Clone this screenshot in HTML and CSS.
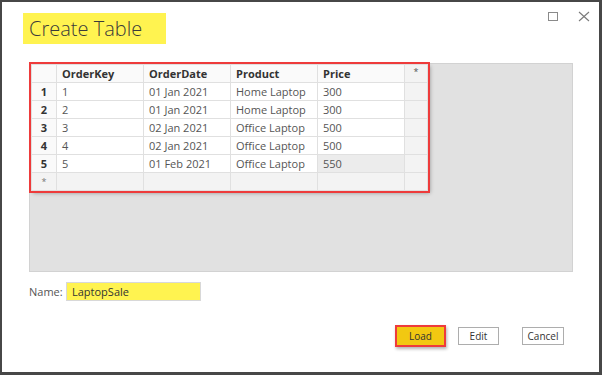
FILE: index.html
```html
<!DOCTYPE html>
<html lang="en">
<head>
    <meta charset="UTF-8">
    <title>Create Table</title>
    <link rel="stylesheet" href="styles.css">
</head>
<body>
    <div class="dialog">
        <div class="titlebar">
            <h1 class="title">Create Table</h1>
            <div class="controls">
                <svg class="ctl" width="12" height="11" viewBox="0 0 12 11"><rect x="1.5" y="1.5" width="9" height="8" fill="none" stroke="#8a8a8a" stroke-width="1"/></svg>
                <svg class="ctl" width="12" height="11" viewBox="0 0 12 11"><path d="M1 1 L11 10 M11 1 L1 10" stroke="#7a7a7a" stroke-width="1.1" fill="none"/></svg>
            </div>
        </div>

        <div class="grid-area">
            <table class="data">
                <thead>
                    <tr>
                        <th class="rn"></th>
                        <th>OrderKey</th>
                        <th>OrderDate</th>
                        <th>Product</th>
                        <th>Price</th>
                        <th class="star">*</th>
                    </tr>
                </thead>
                <tbody>
                    <tr><td class="rn">1</td><td>1</td><td>01 Jan 2021</td><td>Home Laptop</td><td>300</td><td class="star"></td></tr>
                    <tr><td class="rn">2</td><td>2</td><td>01 Jan 2021</td><td>Home Laptop</td><td>300</td><td class="star"></td></tr>
                    <tr><td class="rn">3</td><td>3</td><td>02 Jan 2021</td><td>Office Laptop</td><td>500</td><td class="star"></td></tr>
                    <tr><td class="rn">4</td><td>4</td><td>02 Jan 2021</td><td>Office Laptop</td><td>500</td><td class="star"></td></tr>
                    <tr><td class="rn">5</td><td>5</td><td>01 Feb 2021</td><td>Office Laptop</td><td class="sel">550</td><td class="star"></td></tr>
                    <tr class="new"><td class="rn">*</td><td></td><td></td><td></td><td></td><td class="star"></td></tr>
                </tbody>
            </table>
        </div>

        <div class="name-row">
            <label for="table-name">Name:</label>
            <input type="text" id="table-name" value="LaptopSale">
        </div>

        <div class="buttons">
            <button class="btn load">Load</button>
            <button class="btn edit">Edit</button>
            <button class="btn cancel">Cancel</button>
        </div>
    </div>
</body>
</html>
```

FILE: styles.css
```css
body { margin: 0; font-family: "Open Sans", "Noto Sans", sans-serif; background: #fff; }
.dialog { width: 602px; height: 375px; box-sizing: border-box; border: 2px solid #474747; border-right-width: 3px; border-bottom-width: 3px; background: #fff; }

.titlebar { display: flex; justify-content: space-between; align-items: flex-start; height: 61px; }
.title { margin: 11px 0 0 21px; padding: 0 0 0 6px; width: 143px; box-sizing: border-box; height: 31px; line-height: 32px; background: #fff350; font-size: 20px; font-weight: 300; color: #3a3a3a; }
.controls { display: flex; gap: 19px; margin: 9px 9px 0 0; }

.grid-area { margin: 0 26px 0 27px; height: 207px; background: #e1e1e1; border: 1px solid #d2d2d2; }

.data { border-collapse: collapse; table-layout: fixed; width: 395px; margin: 0 0 0 1px; outline: 2px solid #ee3b3b; box-shadow: 2px 2px 4px rgba(0,0,0,0.35); font-size: 11px; background: #fff; }
.data th, .data td { height: 17px; padding: 0 0 0 5px; border: 1px solid #e0e0e0; text-align: left; color: #555; white-space: nowrap; overflow: hidden; }
.data th { color: #333; font-weight: 700; background: #fafafa; }
.data th:nth-child(2), .data th:nth-child(3), .data th:nth-child(4), .data th:nth-child(5) { width: 81px; }
.data .rn { width: 24px; padding: 0; text-align: center; font-weight: 700; color: #333; background: #fafafa; }
.data .star { width: 22px; padding: 0; text-align: center; background: #f3f3f3; color: #555; font-weight: 400; font-size: 9px; vertical-align: top; }
.data .sel { background: #ececec; }
.data .new td { background: #f3f3f3; }
.data .new .rn { font-weight: 400; font-size: 9px; color: #777; }

.name-row { display: flex; align-items: center; margin: 10px 0 0 27px; font-size: 11px; }
.name-row label { color: #555; width: 37px; }
.name-row input { width: 135px; height: 19px; box-sizing: border-box; border: 1px solid #d8d8d8; background: #fff350; padding: 0 5px; font-family: inherit; font-size: 11px; color: #333; }

.buttons { display: flex; justify-content: flex-end; align-items: center; margin: 24px 35px 0 0; }
.btn { height: 18px; box-sizing: border-box; border: 1px solid #adadad; background: #fff; font-family: inherit; font-size: 10px; color: #333; padding: 0; }
.btn.load { width: 51px; height: 22px; border: 2px solid #ee3b3b; background: #f2c811; box-shadow: 1px 2px 3px rgba(0,0,0,0.3); }
.btn.edit { width: 41px; margin-left: 12px; }
.btn.cancel { width: 42px; margin-left: 23px; }
```
